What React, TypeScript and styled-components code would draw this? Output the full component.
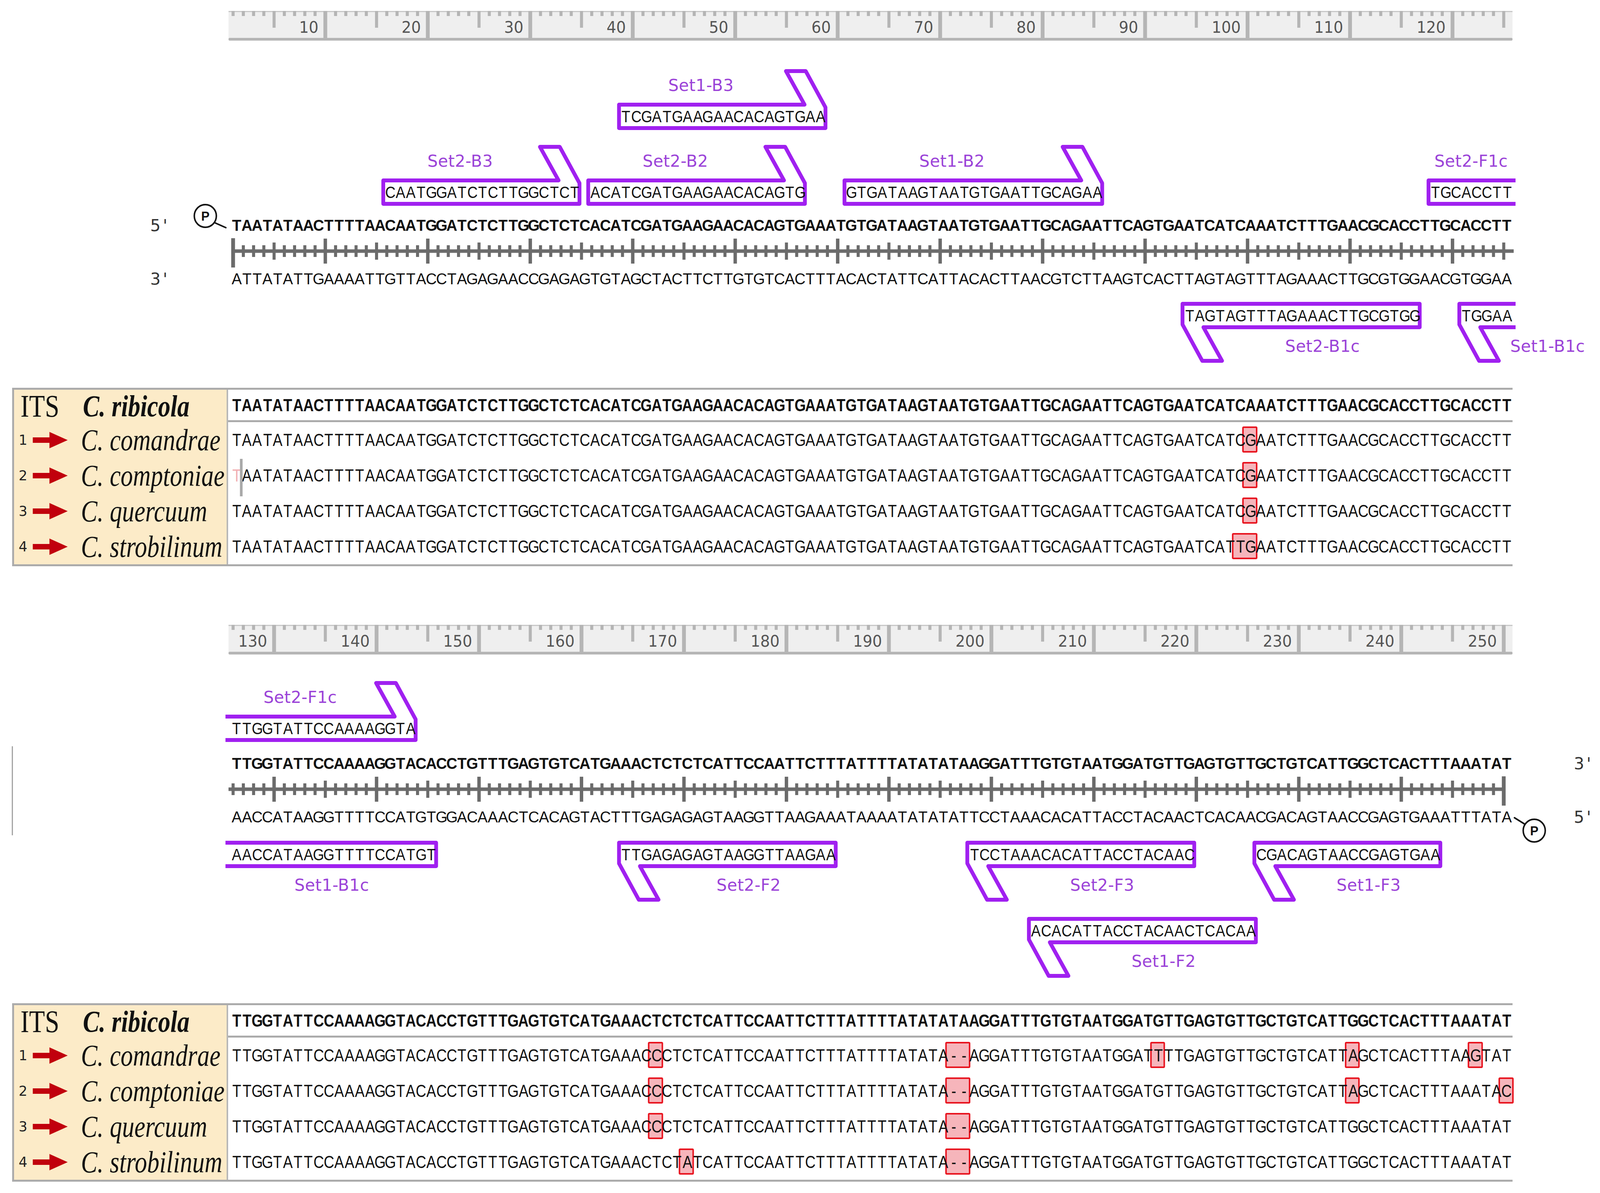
import { useEffect, useState } from "react";
import styled, { createGlobalStyle } from "styled-components";

// geometry of the sequence grid (design pixels of the 4208 x 3055 figure)
const DESIGN_W = 4208;
const DESIGN_H = 3055;
const CELL = 26.95;
const SEQ_X = 609;
const RULER_X = 601;
const PURPLE = "#a020f0";

const cellLeft = (i: number) => SEQ_X + (i - 1) * CELL;
const cellRight = (i: number) => SEQ_X + i * CELL;
const tickX = (i: number) => SEQ_X + (i - 0.85) * CELL;

const PAIR: Record<string, string> = { A: "T", T: "A", G: "C", C: "G" };
const complement = (s: string) => s.split("").map((c) => PAIR[c] ?? c).join("");
const mutate = (ref: string, changes: Record<number, string>) =>
  ref.split("").map((c, k) => changes[k + 1] ?? c).join("");

const TOP1 =
  "TAATATAACTTTTAACAATGGATCTCTTGGCTCTCACATCGATGAAGAACACAGTGAAATGTGATAAGTAATGTGAATTGCAGAATTCAGTGAATCATCAAATCTTTGAACGCACCTTGCACCTT";
const TOP2 =
  "TTGGTATTCCAAAAGGTACACCTGTTTGAGTGTCATGAAACTCTCTCATTCCAATTCTTTATTTTATATATAAGGATTTGTGTAATGGATGTTGAGTGTTGCTGTCATTGGCTCACTTTAAATAT";

type Primer = {
  name: string;
  seq: string;
  start: number;
  flag?: boolean;
  openLeft?: boolean;
  openRight?: boolean;
  labelLeft?: number;
};

type Variant = {
  changes: Record<number, string>;
  marks: [number, number][];
  caret?: boolean;
};

const SPECIES = ["comandrae", "comptoniae", "quercuum", "strobilinum"];

const PANEL1 = {
  offset: 0,
  top: TOP1,
  upper: [{ name: "Set1-B3", seq: "TCGATGAAGAACACAGTGAA", start: 39, flag: true }] as Primer[],
  lower: [
    { name: "Set2-B3", seq: "CAATGGATCTCTTGGCTCT", start: 16, flag: true },
    { name: "Set2-B2", seq: "ACATCGATGAAGAACACAGTG", start: 36, flag: true },
    { name: "Set1-B2", seq: "GTGATAAGTAATGTGAATTGCAGAA", start: 61, flag: true },
    { name: "Set2-F1c", seq: "TGCACCTT", start: 118, openRight: true },
  ] as Primer[],
  rev: [
    { name: "Set2-B1c", seq: "TAGTAGTTTAGAAACTTGCGTGG", start: 94, flag: true },
    { name: "Set1-B1c", seq: "TGGAA", start: 121, flag: true, openRight: true, labelLeft: 3972 },
  ] as Primer[],
  variants: [
    { changes: { 100: "G" }, marks: [[100, 100]] },
    { changes: { 100: "G" }, marks: [[100, 100]], caret: true },
    { changes: { 100: "G" }, marks: [[100, 100]] },
    { changes: { 99: "T", 100: "G" }, marks: [[99, 100]] },
  ] as Variant[],
};

const PANEL2 = {
  offset: 125,
  top: TOP2,
  fwd: [
    { name: "Set2-F1c", seq: "TTGGTATTCCAAAAGGTA", start: 1, flag: true, openLeft: true },
  ] as Primer[],
  rev1: [
    { name: "Set1-B1c", seq: "AACCATAAGGTTTTCCATGT", start: 1, openLeft: true },
    { name: "Set2-F2", seq: "TTGAGAGAGTAAGGTTAAGAA", start: 39, flag: true },
    { name: "Set2-F3", seq: "TCCTAAACACATTACCTACAAC", start: 73, flag: true },
    { name: "Set1-F3", seq: "CGACAGTAACCGAGTGAA", start: 101, flag: true },
  ] as Primer[],
  rev2: [{ name: "Set1-F2", seq: "ACACATTACCTACAACTCACAA", start: 79, flag: true }] as Primer[],
  variants: [
    {
      changes: { 42: "C", 71: "-", 72: "-", 91: "T", 110: "A", 122: "G" },
      marks: [[42, 42], [71, 72], [91, 91], [110, 110], [122, 122]],
    },
    {
      changes: { 42: "C", 71: "-", 72: "-", 110: "A", 125: "C" },
      marks: [[42, 42], [71, 72], [110, 110], [125, 125]],
    },
    { changes: { 42: "C", 71: "-", 72: "-" }, marks: [[42, 42], [71, 72]] },
    { changes: { 45: "A", 71: "-", 72: "-" }, marks: [[45, 45], [71, 72]] },
  ] as Variant[],
};

const FACE = {
  strand: { size: 40, sx: 1 },
  table: { size: 45, sx: 0.85 },
  primer: { size: 43, sx: 0.88 },
};
type Face = keyof typeof FACE;

const GlobalStyle = createGlobalStyle`
  html, body {
    margin: 0;
    padding: 0;
    overflow: hidden;
    background: #ffffff;
  }
  body {
    font-family: "Liberation Sans", Arial, sans-serif;
    color: #111111;
  }
`;

const Page = styled.main`
  width: ${DESIGN_W}px;
  height: ${DESIGN_H}px;
  display: flex;
  flex-direction: column;
  background: #ffffff;
  transform-origin: 0 0;
`;

const Panel = styled.section<{ $mt: number }>`
  display: flex;
  flex-direction: column;
  flex: none;
  margin-top: ${(p) => p.$mt}px;
`;

/* ---------- position ruler ---------- */

const RulerBar = styled.div`
  position: relative;
  flex: none;
  margin-left: ${RULER_X}px;
  width: 3377px;
  height: 76px;

  svg {
    position: absolute;
    left: 0;
    top: 0;
  }
`;

const RulerNum = styled.span`
  position: absolute;
  top: 42px;
  transform: translate(-100%, -50%);
  font-family: "DejaVu Sans", Verdana, sans-serif;
  font-size: 40px;
  line-height: 1;
  color: #555555;
`;

function Ruler({ offset }: { offset: number }) {
  const items = Array.from({ length: 125 }, (_, k) => k + 1);
  return (
    <RulerBar>
      <svg width="3377" height="76" viewBox="0 0 3377 76">
        <rect x="0" y="0" width="3377" height="70" fill="#efefef" />
        <rect x="0" y="0" width="3377" height="3" fill="#c8c8c8" />
        <rect x="0" y="69" width="3377" height="7" rx="3" fill="#b5b5b5" />
        {items.map((i) => {
          const g = offset + i;
          const x = tickX(i) - RULER_X;
          if (g % 10 === 0) return <rect key={i} x={x - 5} y={0} width={10} height={76} fill="#b5b5b5" />;
          return <rect key={i} x={x - 4} y={0} width={8} height={g % 5 === 0 ? 43 : 13} fill="#b5b5b5" />;
        })}
      </svg>
      {items
        .filter((i) => (offset + i) % 10 === 0)
        .map((i) => (
          <RulerNum key={i} style={{ left: tickX(i) - RULER_X - 18 }}>
            {offset + i}
          </RulerNum>
        ))}
    </RulerBar>
  );
}

/* ---------- double strand ---------- */

const DuplexBar = styled.svg`
  display: block;
  flex: none;
  overflow: visible;
`;

function Duplex({ offset, from, to }: { offset: number; from: number; to: number }) {
  const items = Array.from({ length: 125 }, (_, k) => k + 1);
  return (
    <DuplexBar width="4208" height="52" viewBox="0 0 4208 52">
      <rect x={from} y={21.5} width={to - from} height={9} fill="#6b6b6b" />
      {items.map((i) => {
        const g = offset + i;
        const x = tickX(i);
        if (g === 1 || g === 250) return <rect key={i} x={x - 5} y={-7} width={10} height={75} fill="#6b6b6b" />;
        if (g % 10 === 0) return <rect key={i} x={x - 4.5} y={-6} width={9} height={64} fill="#6b6b6b" />;
        if (g % 5 === 0) return <rect key={i} x={x - 4} y={4} width={8} height={44} fill="#6b6b6b" />;
        return <rect key={i} x={x - 4} y={11} width={8} height={30} fill="#6b6b6b" />;
      })}
    </DuplexBar>
  );
}

const StrandBlock = styled.div<{ $edge?: boolean }>`
  position: relative;
  display: flex;
  flex-direction: column;
  flex: none;

  &::before {
    content: "";
    display: ${(p) => (p.$edge ? "block" : "none")};
    position: absolute;
    left: 31px;
    top: -4px;
    bottom: -2px;
    width: 3px;
    background: #a0a0a0;
  }
`;

const StrandRow = styled.div<{ $h: number }>`
  position: relative;
  display: flex;
  align-items: center;
  flex: none;
  height: ${(p) => p.$h}px;
`;

const Gutter = styled.div`
  flex: none;
  width: ${SEQ_X}px;
  padding-left: 395px;
  box-sizing: border-box;
  font-family: "DejaVu Sans", Verdana, sans-serif;
  font-size: 43px;
  line-height: 1;
  letter-spacing: 6px;
  color: #333333;
`;

const EndTag = styled.span`
  flex: none;
  margin-left: 163px;
  font-family: "DejaVu Sans", Verdana, sans-serif;
  font-size: 43px;
  line-height: 1;
  letter-spacing: 6px;
  color: #333333;
`;

const PhosMark = styled.svg<{ $left: number; $top: number }>`
  position: absolute;
  left: ${(p) => p.$left}px;
  top: ${(p) => p.$top}px;
  overflow: visible;
`;

function Phosphate({ left, top, cx, cy, tail }: { left: number; top: number; cx: number; cy: number; tail: [number, number, number, number] }) {
  return (
    <PhosMark $left={left} $top={top} width="96" height="76" viewBox="0 0 96 76">
      <line x1={tail[0]} y1={tail[1]} x2={tail[2]} y2={tail[3]} stroke="#111" strokeWidth="4" strokeLinecap="round" />
      <circle cx={cx} cy={cy} r="29" fill="#fff" stroke="#111" strokeWidth="4" />
      <text
        x={cx}
        y={cy + 12}
        textAnchor="middle"
        fontFamily="Liberation Sans, Arial, sans-serif"
        fontWeight="700"
        fontSize="33"
        fill="#111"
      >
        P
      </text>
    </PhosMark>
  );
}

/* ---------- bases ---------- */

const SeqLine = styled.div`
  position: relative;
  display: flex;
  flex: none;
`;

const Base = styled.span<{ $face: Face; $bold?: boolean; $faint?: boolean }>`
  position: relative;
  z-index: 1;
  flex: none;
  width: ${CELL}px;
  display: flex;
  justify-content: center;
  font-family: "Liberation Sans", Arial, sans-serif;
  font-size: ${(p) => FACE[p.$face].size}px;
  font-weight: ${(p) => (p.$bold ? 700 : 400)};
  line-height: 1;
  color: ${(p) => (p.$faint ? "#f1b0b4" : "#111111")};
`;

const Glyph = styled.span<{ $face: Face }>`
  display: inline-block;
  transform: scaleX(${(p) => FACE[p.$face].sx});
`;

function Bases({ seq, face, bold, faintFirst }: { seq: string; face: Face; bold?: boolean; faintFirst?: boolean }) {
  return (
    <>
      {seq.split("").map((c, k) => (
        <Base key={k} $face={face} $bold={bold} $faint={faintFirst && k === 0}>
          <Glyph $face={face}>{c}</Glyph>
        </Base>
      ))}
    </>
  );
}

const Mark = styled.span`
  position: absolute;
  z-index: 0;
  top: 50%;
  height: 67px;
  margin-top: -35px;
  box-sizing: border-box;
  background: #f6b5bb;
  border: 4px solid #e8141f;
  border-radius: 4px;
`;

const Caret = styled.span`
  position: absolute;
  z-index: 2;
  left: ${CELL - 5}px;
  top: 50%;
  margin-top: -43px;
  width: 7px;
  height: 96px;
  background: #a9a9a9;
`;

/* ---------- primers ---------- */

const Track = styled.div<{ $h: number }>`
  position: relative;
  flex: none;
  height: ${(p) => p.$h}px;
`;

const PrimerShape = styled.svg`
  position: absolute;
  overflow: visible;
`;

const PrimerSeq = styled.div`
  position: absolute;
  height: 70px;
  display: flex;
  align-items: center;
`;

const PrimerName = styled.span`
  position: absolute;
  font-family: "DejaVu Sans", Verdana, sans-serif;
  font-size: 43px;
  line-height: 1;
  letter-spacing: 0.5px;
  white-space: nowrap;
  color: #9b43d8;
`;

// outline drawn for a forward primer (box with a flag at its right end going up);
// reverse primers use the same outline turned half a turn
function primerPath(W: number, flag: boolean, openL: boolean, openR: boolean) {
  const t = 95;
  const b = 155;
  const topEdge = flag ? `H ${W - 60} L ${W - 109} 9 L ${W - 57} 9 L ${W - 5} 102` : `H ${W - 5}`;
  if (openR && !flag) return `M ${W} ${t} H 5 V ${b} H ${W}`;
  if (openL) return `M 0 ${t} ${topEdge} V ${b} H 0`;
  return `M 5 ${t} ${topEdge} V ${b} H 5 Z`;
}

function PrimerMark({ p, boxTop, rev }: { p: Primer; boxTop: number; rev?: boolean }) {
  const end = p.start + p.seq.length - 1;
  const L = p.openLeft ? 593 : cellLeft(p.start) - 10;
  const R = p.openRight ? 3986 : cellRight(end) + 4;
  const W = R - L;
  const d = primerPath(W, !!p.flag, rev ? !!p.openRight : !!p.openLeft, rev ? !!p.openLeft : !!p.openRight);
  const center = p.flag ? (rev ? (L + 112 + R) / 2 : (L + R - 112) / 2) : (L + R) / 2;
  const labelTop = rev ? boxTop + 113 : boxTop - 45;
  return (
    <>
      <PrimerShape
        width={W}
        height={160}
        viewBox={`0 0 ${W} 160`}
        style={{ left: L, top: rev ? boxTop : boxTop - 90 }}
      >
        <path
          d={d}
          fill="none"
          stroke={PURPLE}
          strokeWidth="10"
          strokeLinejoin="round"
          transform={rev ? `rotate(180 ${W / 2} 80)` : undefined}
        />
      </PrimerShape>
      <PrimerSeq style={{ left: cellLeft(p.start), top: boxTop }}>
        <Bases seq={p.seq} face="primer" />
      </PrimerSeq>
      <PrimerName
        style={
          p.labelLeft
            ? { left: p.labelLeft, top: labelTop, transform: "translate(0, -50%)" }
            : { left: center, top: labelTop, transform: "translate(-50%, -50%)" }
        }
      >
        {p.name}
      </PrimerName>
    </>
  );
}

function PrimerTrack({ h, boxTop, primers, rev }: { h: number; boxTop: number; primers: Primer[]; rev?: boolean }) {
  return (
    <Track $h={h}>
      {primers.map((p) => (
        <PrimerMark key={p.name} p={p} boxTop={boxTop} rev={rev} />
      ))}
    </Track>
  );
}

/* ---------- alignment table ---------- */

const AlignTable = styled.div<{ $mt: number }>`
  display: flex;
  flex: none;
  margin-top: ${(p) => p.$mt}px;
  margin-left: 32px;
  width: 3946px;
  box-sizing: border-box;
  border-top: 5px solid #ababab;
  border-bottom: 5px solid #ababab;
  border-left: 5px solid #ababab;
`;

const LabelCol = styled.div`
  flex: none;
  width: 559px;
  display: flex;
  flex-direction: column;
  background: #fcebc8;
  border-right: 4px solid #b7b7b7;
`;

const LabelHead = styled.div`
  height: 83px;
  display: flex;
  align-items: center;
  padding-left: 17px;
`;

const LabelRow = styled.div`
  height: 91px;
  display: flex;
  align-items: center;
  padding-left: 12px;
`;

const Its = styled.span`
  flex: none;
  width: 164px;
  font-family: "Liberation Serif", "Times New Roman", serif;
  font-size: 80px;
  line-height: 1;
  transform: scaleX(0.85);
  transform-origin: left center;
`;

const SpeciesName = styled.span<{ $head?: boolean }>`
  flex: none;
  white-space: nowrap;
  font-family: "Liberation Serif", "Times New Roman", serif;
  font-style: italic;
  font-weight: ${(p) => (p.$head ? 700 : 400)};
  font-size: 78px;
  line-height: 1;
  color: #111111;
  transform: scaleX(0.83);
  transform-origin: left center;
`;

const RowNum = styled.span`
  flex: none;
  width: 37px;
  font-family: "DejaVu Sans", Verdana, sans-serif;
  font-size: 36px;
  line-height: 1;
  color: #222222;
`;

const PointArrow = styled.svg`
  flex: none;
  margin-right: 35px;
`;

const SeqCol = styled.div`
  flex: 1;
  display: flex;
  flex-direction: column;
  min-width: 0;
`;

const AlignHead = styled.div`
  height: 78px;
  display: flex;
  align-items: center;
  padding-left: 9px;
  border-bottom: 5px solid #ababab;
`;

const AlignRow = styled.div`
  height: 91px;
  display: flex;
  align-items: center;
  padding-left: 9px;
`;

function Arrow() {
  return (
    <PointArrow width="92" height="44" viewBox="0 0 92 44">
      <rect x="0" y="15" width="48" height="14" fill="#c1000d" />
      <polygon points="44,1 92,22 44,43" fill="#c1000d" />
    </PointArrow>
  );
}

function Alignment({ mt, ref, variants }: { mt: number; ref: string; variants: Variant[] }) {
  return (
    <AlignTable $mt={mt}>
      <LabelCol>
        <LabelHead>
          <Its>ITS</Its>
          <SpeciesName $head>C. ribicola</SpeciesName>
        </LabelHead>
        {SPECIES.map((s, k) => (
          <LabelRow key={s}>
            <RowNum>{k + 1}</RowNum>
            <Arrow />
            <SpeciesName>C. {s}</SpeciesName>
          </LabelRow>
        ))}
      </LabelCol>
      <SeqCol>
        <AlignHead>
          <SeqLine>
            <Bases seq={ref} face="table" bold />
          </SeqLine>
        </AlignHead>
        {variants.map((v, k) => (
          <AlignRow key={k}>
            <SeqLine>
              {v.marks.map(([s, e]) => (
                <Mark key={s} style={{ left: (s - 1) * CELL - 10, width: (e - s + 1) * CELL + 13 }} />
              ))}
              <Bases seq={mutate(ref, v.changes)} face="table" faintFirst={v.caret} />
              {v.caret && <Caret />}
            </SeqLine>
          </AlignRow>
        ))}
      </SeqCol>
    </AlignTable>
  );
}

// the figure is drawn on a fixed 4208 x 3055 design grid and stretched to fill the viewport
function viewportFit() {
  if (typeof window === "undefined") return { sx: 1, sy: 1 };
  const w = document.documentElement.clientWidth || window.innerWidth;
  const h = document.documentElement.clientHeight || window.innerHeight;
  return { sx: w > 0 ? w / DESIGN_W : 1, sy: h > 0 ? h / DESIGN_H : 1 };
}

export default function App() {
  const [fit, setFit] = useState(viewportFit);

  useEffect(() => {
    const onResize = () => setFit(viewportFit());
    window.addEventListener("resize", onResize);
    return () => window.removeEventListener("resize", onResize);
  }, []);

  return (
    <Page style={{ transform: `scale(${fit.sx}, ${fit.sy})` }}>
      <GlobalStyle />

      <Panel $mt={28}>
        <Ruler offset={PANEL1.offset} />
        <PrimerTrack h={236} boxTop={159} primers={PANEL1.upper} />
        <PrimerTrack h={197} boxTop={117} primers={PANEL1.lower} />
        <StrandBlock>
          <StrandRow $h={80}>
            <Gutter>5'</Gutter>
            <SeqLine>
              <Bases seq={PANEL1.top} face="strand" bold />
            </SeqLine>
            <Phosphate left={508} top={-16} cx={32} cy={32} tail={[56, 49, 86, 62]} />
          </StrandRow>
          <Duplex offset={PANEL1.offset} from={609} to={3981} />
          <StrandRow $h={90}>
            <Gutter>3'</Gutter>
            <SeqLine>
              <Bases seq={complement(PANEL1.top)} face="strand" />
            </SeqLine>
          </StrandRow>
        </StrandBlock>
        <PrimerTrack h={201} boxTop={14} primers={PANEL1.rev} rev />
        <Alignment mt={33} ref={PANEL1.top} variants={PANEL1.variants} />
      </Panel>

      <Panel $mt={150}>
        <Ruler offset={PANEL2.offset} />
        <PrimerTrack h={239} boxTop={154} primers={PANEL2.fwd} />
        <StrandBlock $edge>
          <StrandRow $h={80}>
            <Gutter />
            <SeqLine>
              <Bases seq={PANEL2.top} face="strand" bold />
            </SeqLine>
            <EndTag>3'</EndTag>
          </StrandRow>
          <Duplex offset={PANEL2.offset} from={601} to={3958} />
          <StrandRow $h={90}>
            <Gutter />
            <SeqLine>
              <Bases seq={complement(PANEL2.top)} face="strand" />
            </SeqLine>
            <EndTag>5'</EndTag>
            <Phosphate left={3975} top={42} cx={60} cy={38} tail={[8, 5, 36, 22]} />
          </StrandRow>
        </StrandBlock>
        <PrimerTrack h={194} boxTop={16} primers={PANEL2.rev1} rev />
        <PrimerTrack h={220} boxTop={17} primers={PANEL2.rev2} rev />
        <Alignment mt={18} ref={PANEL2.top} variants={PANEL2.variants} />
      </Panel>
    </Page>
  );
}
